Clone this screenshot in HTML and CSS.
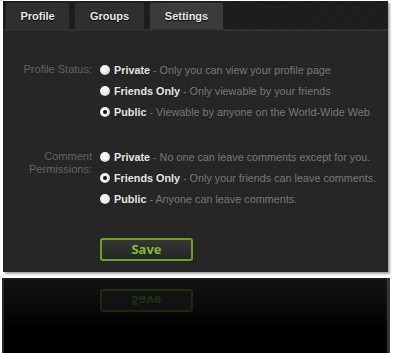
FILE: index.html
```html
<!DOCTYPE html>
<html>
<head>
    <title>Settings</title>
    <link rel="stylesheet" href="styles.css">
</head>
<body>
    <div class="panel">
        <div class="tabs">
            <a class="tab tab-profile">Profile</a>
            <a class="tab tab-groups">Groups</a>
            <a class="tab tab-settings active">Settings</a>
        </div>

        <div class="content">
            <div class="group">
                <div class="label">Profile Status:</div>
                <div class="options">
                    <div class="option"><span class="radio"></span><b>Private</b> - Only you can view your profile page</div>
                    <div class="option"><span class="radio"></span><b>Friends Only</b> - Only viewable by your friends</div>
                    <div class="option"><span class="radio checked"></span><b>Public</b> - Viewable by anyone on the World-Wide Web</div>
                </div>
            </div>

            <div class="group">
                <div class="label">Comment<br>Permissions:</div>
                <div class="options">
                    <div class="option"><span class="radio"></span><b>Private</b> - No one can leave comments except for you.</div>
                    <div class="option"><span class="radio checked"></span><b>Friends Only</b> - Only your friends can leave comments.</div>
                    <div class="option"><span class="radio"></span><b>Public</b> - Anyone can leave comments.</div>
                </div>
            </div>

            <div class="actions">
                <button class="save">Save</button>
            </div>
        </div>
    </div>

    <div class="reflection">
        <div class="actions">
            <button class="save mirrored">Save</button>
        </div>
    </div>
</body>
</html>
```

FILE: styles.css
```css
body {
    margin: 0;
    background: #ffffff;
    font-family: "Liberation Sans", Arial, sans-serif;
    font-size: 11px;
    overflow: hidden;
}
.panel {
    margin: 1px 0 0 3px;
    width: 385px;
    height: 271px;
    background: #262626;
    box-shadow: 2px 2px 2px rgba(0,0,0,0.35);
    display: flex;
    flex-direction: column;
}
.tabs {
    height: 30px;
    padding: 4px 0 0 3px;
    box-sizing: border-box;
    display: flex;
    align-items: flex-end;
    gap: 6px;
    background-color: #1e1e1e;
    background-image: repeating-linear-gradient(135deg, #222 0, #222 1px, #1b1b1b 1px, #1b1b1b 3px);
    border-bottom: 2px solid #303030;
}
.tab {
    height: 26px;
    line-height: 26px;
    text-align: center;
    font-weight: bold;
    color: #e6e6e6;
    text-shadow: 0 1px 1px #000;
    background: #2f2f2f;
    border-radius: 3px 3px 0 0;
    box-shadow: inset 0 1px 0 #363636;
}
.tab-profile { width: 63px; }
.tab-groups { width: 69px; }
.tab-settings { width: 73px; }
.tab.active {
    background: #3b3b3b;
    box-shadow: inset 0 1px 0 #444;
}
.content {
    padding-top: 28px;
}
.group {
    display: flex;
    margin-bottom: 24px;
}
.label {
    width: 89px;
    text-align: right;
    color: #626262;
    line-height: 13px;
    padding-top: 4px;
    margin-right: 8px;
}
.option {
    height: 21px;
    display: flex;
    align-items: center;
    color: #777;
    font-size: 10.8px;
    white-space: pre;
}
.option b {
    color: #e2e2e2;
}
.radio {
    width: 10px;
    height: 10px;
    border-radius: 50%;
    background: radial-gradient(circle at 40% 35%, #ffffff 0, #f0f0f0 45%, #bdbdbd 100%);
    margin-right: 4px;
    position: relative;
}
.radio.checked::after {
    content: "";
    position: absolute;
    left: 3px;
    top: 3px;
    width: 4px;
    height: 4px;
    border-radius: 50%;
    background: #111;
}
.actions {
    padding-left: 97px;
    margin-top: 29px;
}
.save {
    width: 93px;
    height: 23px;
    padding: 0;
    border: 2px solid #6c9e2c;
    border-radius: 3px;
    background: linear-gradient(#363636, #252525);
    color: #82b735;
    font-family: "Open Sans", sans-serif;
    font-weight: bold;
    font-size: 13px;
    line-height: 19px;
}
.reflection {
    margin: 6px 0 0 2px;
    width: 388px;
    height: 80px;
    background: linear-gradient(#131313, #0a0a0a 35%, #000 65%);
    box-shadow: inset 2px 0 0 #2a2a2a, inset -3px 0 2px #3a3a3a;
    padding-top: 11px;
    box-sizing: border-box;
}
.reflection .actions {
    margin-top: 0;
    padding-left: 98px;
}
.save.mirrored {
    transform: scaleY(-1);
    opacity: 0.2;
}
```
